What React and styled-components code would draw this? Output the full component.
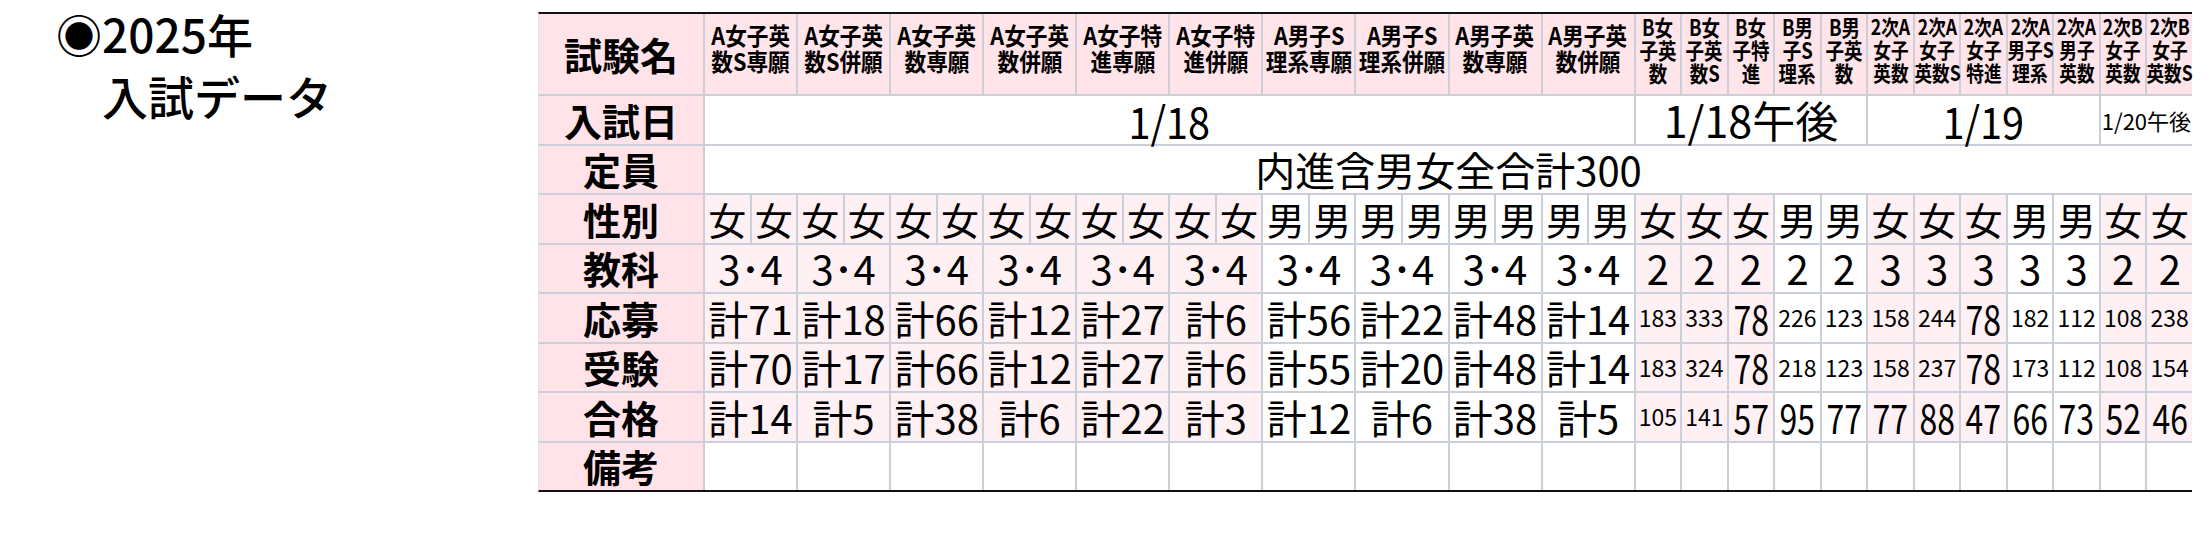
import React from 'react';
import styled, { createGlobalStyle } from 'styled-components';

const GlobalStyle = createGlobalStyle`
  html, body { margin: 0; padding: 0; background: #ffffff; }
  body { font-family: "Noto Sans CJK JP", sans-serif; color: #000; }
`;

const Page = styled.div`
  width: 2210px;
  height: 560px;
  box-sizing: border-box;
  display: flex;
  align-items: flex-start;
`;

const Title = styled.h1`
  margin: 0;
  width: 538px;
  flex: none;
  box-sizing: border-box;
  padding: 2px 0 0 56px;
  font: 500 46px/62px "Noto Sans CJK JP", sans-serif;
  color: #000;
  white-space: pre;
`;

const Grid = styled.div`
  margin-top: 12px;
  width: 1654px;
  height: 480px;
  flex: none;
  box-sizing: border-box;
  display: grid;
  grid-template-columns: 164px repeat(32, 1fr);
  grid-template-rows: 80px repeat(8, 1fr);
  gap: 2px;
  background: #cbcfda;
  border-top: 2px solid #111;
  border-bottom: 2px solid #111;
  border-left: 1px solid #dfe1e8;
  font-family: "Noto Sans CJK JP", sans-serif;
  color: #000;
`;

const tones = {
  label: '#ffe3e8',
  head: '#ffe5ea',
  pink: '#fff0f4',
  white: '#ffffff',
};

const Cell = styled.div`
  grid-column: span ${(p) => p.$span || 1};
  background: ${(p) => tones[p.$tone || 'white']};
  display: flex;
  align-items: center;
  justify-content: center;
  white-space: nowrap;
  min-width: 0;
`;

const Squeeze = styled.span`
  display: inline-block;
  white-space: nowrap;
  transform: scaleX(${(p) => p.$k || 1});
`;

const LabelCell = styled(Cell)`
  font: 700 38px/1 "Noto Sans CJK JP", sans-serif;
`;

const HeadA = styled(Cell)`
  flex-direction: column;
  padding-bottom: 12px;
  box-sizing: border-box;
  font-weight: 700;
  font-size: 24px;
  line-height: 26px;
`;

const HeadB = styled(Cell)`
  flex-direction: column;
  padding-bottom: 10px;
  box-sizing: border-box;
  font-weight: 700;
  font-size: ${(p) => (p.$narrow ? 21 : 22)}px;
  line-height: 23px;
`;

const Value = styled(Cell)`
  font-size: ${(p) => p.$size || 40}px;
  line-height: 1;
  font-weight: 400;
`;

const aCols = [
  { name: ['A女子英', '数S専願'], sex: '女', app: '計71', exam: '計70', pass: '計14' },
  { name: ['A女子英', '数S併願'], sex: '女', app: '計18', exam: '計17', pass: '計5' },
  { name: ['A女子英', '数専願'], sex: '女', app: '計66', exam: '計66', pass: '計38' },
  { name: ['A女子英', '数併願'], sex: '女', app: '計12', exam: '計12', pass: '計6' },
  { name: ['A女子特', '進専願'], sex: '女', app: '計27', exam: '計27', pass: '計22' },
  { name: ['A女子特', '進併願'], sex: '女', app: '計6', exam: '計6', pass: '計3' },
  { name: ['A男子S', '理系専願'], sex: '男', app: '計56', exam: '計55', pass: '計12' },
  { name: ['A男子S', '理系併願'], sex: '男', app: '計22', exam: '計20', pass: '計6' },
  { name: ['A男子英', '数専願'], sex: '男', app: '計48', exam: '計48', pass: '計38' },
  { name: ['A男子英', '数併願'], sex: '男', app: '計14', exam: '計14', pass: '計5' },
];

const bCols = [
  { name: ['B女', '子英', '数'], sex: '女', subj: '2', app: '183', exam: '183', pass: '105' },
  { name: ['B女', '子英', '数S'], sex: '女', subj: '2', app: '333', exam: '324', pass: '141' },
  { name: ['B女', '子特', '進'], sex: '女', subj: '2', app: '78', exam: '78', pass: '57' },
  { name: ['B男', '子S', '理系'], sex: '男', subj: '2', app: '226', exam: '218', pass: '95' },
  { name: ['B男', '子英', '数'], sex: '男', subj: '2', app: '123', exam: '123', pass: '77' },
  { name: ['2次A', '女子', '英数'], sex: '女', subj: '3', app: '158', exam: '158', pass: '77', narrow: true },
  { name: ['2次A', '女子', '英数S'], sex: '女', subj: '3', app: '244', exam: '237', pass: '88', narrow: true },
  { name: ['2次A', '女子', '特進'], sex: '女', subj: '3', app: '78', exam: '78', pass: '47', narrow: true },
  { name: ['2次A', '男子S', '理系'], sex: '男', subj: '3', app: '182', exam: '173', pass: '66', narrow: true },
  { name: ['2次A', '男子', '英数'], sex: '男', subj: '3', app: '112', exam: '112', pass: '73', narrow: true },
  { name: ['2次B', '女子', '英数'], sex: '女', subj: '2', app: '108', exam: '108', pass: '52', narrow: true },
  { name: ['2次B', '女子', '英数S'], sex: '女', subj: '2', app: '238', exam: '154', pass: '46', narrow: true },
];

const toneOf = (sex) => (sex === '女' ? 'pink' : 'white');
const isSmall = (v) => v.length >= 3 && !v.startsWith('計');

const dataRows = [
  { label: '応募', key: 'app' },
  { label: '受験', key: 'exam' },
  { label: '合格', key: 'pass' },
];

function BValue({ value, tone }) {
  if (isSmall(value)) {
    return (
      <Value $tone={tone} $size={23}>
        {value}
      </Value>
    );
  }
  return (
    <Value $tone={tone} $size={40}>
      <Squeeze $k={0.8}>{value}</Squeeze>
    </Value>
  );
}

export default function App() {
  return (
    <>
      <GlobalStyle />
      <Page>
        <Title>{'◉2025年\n　入試データ'}</Title>
        <Grid>
          <LabelCell $tone="label">試験名</LabelCell>
          {aCols.map((c, i) => (
            <HeadA key={`ha${i}`} $span={2} $tone="head">
              {c.name.map((l, j) => (
                <Squeeze key={j} $k={0.9}>{l}</Squeeze>
              ))}
            </HeadA>
          ))}
          {bCols.map((c, i) => (
            <HeadB key={`hb${i}`} $tone="head" $narrow={c.narrow}>
              {c.name.map((l, j) => (
                <Squeeze key={j} $k={0.84}>{l}</Squeeze>
              ))}
            </HeadB>
          ))}

          <LabelCell $tone="label">入試日</LabelCell>
          <Value $span={20} $size={44}><Squeeze $k={0.9}>1/18</Squeeze></Value>
          <Value $span={5} $size={43}>1/18午後</Value>
          <Value $span={5} $size={44}><Squeeze $k={0.9}>1/19</Squeeze></Value>
          <Value $span={2} $size={22}>1/20午後</Value>

          <LabelCell $tone="label">定員</LabelCell>
          <Value $span={32} $size={40}>内進含男女全合計300</Value>

          <LabelCell $tone="label">性別</LabelCell>
          {aCols.map((c, i) => (
            <React.Fragment key={`sa${i}`}>
              <Value $tone={toneOf(c.sex)} $size={38}>{c.sex}</Value>
              <Value $tone={toneOf(c.sex)} $size={38}>{c.sex}</Value>
            </React.Fragment>
          ))}
          {bCols.map((c, i) => (
            <Value key={`sb${i}`} $tone={toneOf(c.sex)} $size={38}>{c.sex}</Value>
          ))}

          <LabelCell $tone="label">教科</LabelCell>
          {aCols.map((c, i) => (
            <Value key={`ka${i}`} $span={2} $tone={toneOf(c.sex)}>3･4</Value>
          ))}
          {bCols.map((c, i) => (
            <Value key={`kb${i}`} $tone={toneOf(c.sex)}>{c.subj}</Value>
          ))}

          {dataRows.map((r) => (
            <React.Fragment key={r.key}>
              <LabelCell $tone="label">{r.label}</LabelCell>
              {aCols.map((c, i) => (
                <Value key={`${r.key}a${i}`} $span={2} $tone={toneOf(c.sex)} $size={40}>
                  {c[r.key]}
                </Value>
              ))}
              {bCols.map((c, i) => (
                <BValue key={`${r.key}b${i}`} value={c[r.key]} tone={toneOf(c.sex)} />
              ))}
            </React.Fragment>
          ))}

          <LabelCell $tone="label">備考</LabelCell>
          {aCols.map((c, i) => (
            <Value key={`na${i}`} $span={2} />
          ))}
          {bCols.map((c, i) => (
            <Value key={`nb${i}`} />
          ))}
        </Grid>
      </Page>
    </>
  );
}
